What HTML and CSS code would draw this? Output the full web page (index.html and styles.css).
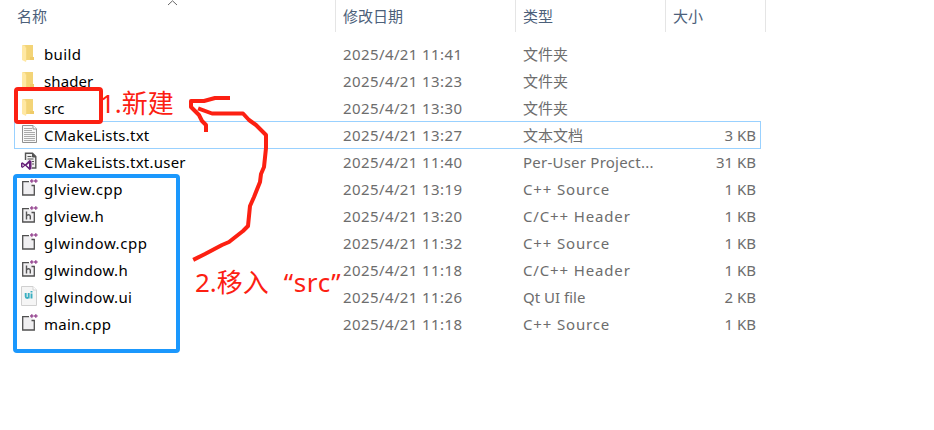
FILE: index.html
```html
<!DOCTYPE html>
<html lang="zh-CN">
<head>
<meta charset="utf-8">
<title>文件列表</title>
<link rel="stylesheet" href="styles.css">
</head>
<body>
<svg class="defs" width="0" height="0">
  <symbol id="folder" viewBox="0 0 20 20"><path d="M5 2H13V17H5Z" fill="#f3d477"/><path d="M10 14h4V17h-4z" fill="#efcb68"/><path d="M2 2L6 4.500V19L2 17Z" fill="#ffe8a3"/><path d="M2 2H5L6.500 4.500V16L6 19V4.500Z" fill="#f8dc87"/></symbol>
  <symbol id="text" viewBox="0 0 20 20"><path d="M2.500 1.500H13L16.500 5V18.500H2.500Z" fill="#f8f8f8" stroke="#919191"/><path d="M13 1.500V5h3.500" fill="#fff" stroke="#919191"/><path d="M4 4.500h8M4 6.500h8M4 8.500h11M4 10.500h11M4 12.500h11M4 14.500h11M4 16.500h11" stroke="#aaa"/></symbol>
  <symbol id="user" viewBox="0 0 20 20"><path d="M5.500 9V2.200H12.500L15.800 5.500V17H12" fill="#f1f1f1" stroke="#555" stroke-width="1.400"/><path d="M12.500 2.500V6H16" fill="#555" stroke="#555"/><path d="M7.500 5.500h4M7.500 8h6M12 10.500h2M12 13h2" stroke="#555"/><path d="M1 12l1.500-.8 2.700 2.100L9.500 9l2 1v8l-2 1-4.300-4.200-2.700 2.100L1 16ZM2.500 13v2.500L4 14.200ZM9 12.200l-2.400 2L9 16.200Z" fill="#68217a" fill-rule="evenodd"/></symbol>
  <symbol id="cpp" viewBox="0 0 20 20"><path d="M2.700 3.700H11L14.300 7V17H2.700Z" fill="#f0eff1"/><path d="M9 3.700H2.700V17H14.300V7.500H11.500" fill="none" stroke="#505050" stroke-width="1.300"/><path d="M10 3h3.600M11.800 1.200v3.600M14 3h3.600M15.800 1.200v3.600" stroke="#9b4f96" stroke-width="1.500"/></symbol>
  <symbol id="header" viewBox="0 0 20 20"><use href="#cpp"/><path d="M6.500 6.500V14.500M6.500 11c.8-1.800 3.800-1.800 3.800.3V14.500" fill="none" stroke="#555" stroke-width="1.400"/></symbol>
  <symbol id="ui" viewBox="0 0 20 20"><path d="M1.500.5H13L16.500 4V19.500H1.500Z" fill="#f5f5f5" stroke="#d0d0d0"/><path d="M13 .5V4h3.500" fill="#fff" stroke="#d2d2d2"/><path d="M5.700 7v3.500q0 1.500 1.500 1.500t1.500-1.500V7V12.500M11.500 7.500V12.500M11.500 5v1.500" fill="none" stroke="#3bafc1" stroke-width="1.900"/></symbol>
</svg>
<main class="explorer">
  <header class="row heading">
    <div class="name">名称<svg class="sort" viewBox="0 0 10 6"><path d="M.5 5L5 .8 9.500 5" fill="none" stroke="#666"/></svg></div><div>修改日期</div><div>类型</div><div>大小</div>
  </header>
  <section class="files">
    <div class="row"><div class="name"><svg><use href="#folder"/></svg>build</div><div class="date">2025/4/21 11:41</div><div>文件夹</div><div class="size"></div></div>
    <div class="row"><div class="name tight"><svg><use href="#folder"/></svg>shader</div><div class="date">2025/4/21 13:23</div><div>文件夹</div><div class="size"></div></div>
    <div class="row"><div class="name tight"><svg><use href="#folder"/></svg>src</div><div class="date">2025/4/21 13:30</div><div>文件夹</div><div class="size"></div></div>
    <div class="row selected"><div class="name project"><svg><use href="#text"/></svg>CMakeLists.txt</div><div class="date">2025/4/21 13:27</div><div>文本文档</div><div class="size">3 KB</div></div>
    <div class="row"><div class="name project"><svg><use href="#user"/></svg>CMakeLists.txt.user</div><div class="date">2025/4/21 11:40</div><div class="project">Per-User Project...</div><div class="size">31 KB</div></div>
    <div class="row"><div class="name source"><svg><use href="#cpp"/></svg>glview.cpp</div><div class="date">2025/4/21 13:19</div><div class="kind">C++ Source</div><div class="size">1 KB</div></div>
    <div class="row"><div class="name"><svg><use href="#header"/></svg>glview.h</div><div class="date">2025/4/21 13:20</div><div class="kind">C/C++ Header</div><div class="size">1 KB</div></div>
    <div class="row"><div class="name source"><svg><use href="#cpp"/></svg>glwindow.cpp</div><div class="date">2025/4/21 11:32</div><div class="kind">C++ Source</div><div class="size">1 KB</div></div>
    <div class="row"><div class="name"><svg><use href="#header"/></svg>glwindow.h</div><div class="date">2025/4/21 11:18</div><div class="kind">C/C++ Header</div><div class="size">1 KB</div></div>
    <div class="row"><div class="name"><svg><use href="#ui"/></svg>glwindow.ui</div><div class="date">2025/4/21 11:26</div><div>Qt UI file</div><div class="size">2 KB</div></div>
    <div class="row"><div class="name project"><svg><use href="#cpp"/></svg>main.cpp</div><div class="date">2025/4/21 11:18</div><div class="kind">C++ Source</div><div class="size">1 KB</div></div>
  </section>
  <div class="box red-box"></div>
  <div class="box blue-box"></div>
  <svg class="arrow" viewBox="0 0 934 430"><path d="M228 98H215L204 101H191V107L199 115 202 121 206 125V130M200 109L212 113.500H243L249 120 256 125 266 135V148L264 167 261 174 260 182 254 197 250 206 248 226 243 231 229 242 222 245 205 254 195 259"/></svg>
  <div class="note note-create">1.新建</div>
  <div class="note note-move">2.移入<span class="quote">“src”</span></div>
</main>
</body>
</html>
```
FILE: styles.css
```css
body { margin: 0; background: #fff; }
.defs { position: absolute; }
.explorer {
  position: relative;
  width: 934px;
  height: 430px;
  overflow: hidden;
  font: 15px/27px "Noto Sans", "Noto Sans CJK SC", sans-serif;
  color: #6d6d6d;
}
.row {
  display: grid;
  grid-template-columns: 328px 180px 150px 100px;
  width: 758px;
  height: 27px;
  padding-left: 8px;
  white-space: nowrap;
}
.row > div { padding-left: 7px; }
.heading { height: 32px; color: #4c607a; margin-bottom: 9px; }
.heading > div { height: 32px; line-height: 33px; box-sizing: border-box; border-right: 1px solid #e5e5e5; }
.heading .name { padding-left: 9px; position: relative; }
.sort { position: absolute; left: 159px; top: 0; width: 11px; height: 6px; }
.files .name { display: flex; align-items: center; color: #000; padding-left: 12px; letter-spacing: .35px; }
.files .name svg { width: 20px; height: 20px; margin: 0 4px 3px 0; }
.files .tight { letter-spacing: .1px; }
.files .source { letter-spacing: .55px; }
.files .project { letter-spacing: .23px; }
.kind { letter-spacing: .85px; }
.date { letter-spacing: .4px; }
.row > .size { text-align: right; padding: 0 10px 0 0; }
.selected { position: relative; }
.selected::after {
  content: "";
  position: absolute;
  left: 14px;
  top: -1px;
  width: 745px;
  height: 26px;
  border: 1px solid #99d1ff;
}
.box { position: absolute; box-sizing: border-box; border: 4px solid; border-radius: 4px; }
.red-box { left: 14px; top: 87px; width: 89px; height: 37px; border-color: #fc2012; }
.blue-box { left: 13px; top: 174px; width: 167px; height: 179px; border-color: #1b98fd; }
.arrow { position: absolute; left: 0; top: 0; width: 934px; height: 430px; }
.arrow path { fill: none; stroke: #fc2012; stroke-width: 4; stroke-linecap: square; stroke-linejoin: round; }
.note { position: absolute; color: #fc2012; font-size: 26px; line-height: 36px; white-space: nowrap; }
.note-create { left: 100px; top: 85px; }
.note-move { left: 195px; top: 264px; }
.quote { margin-left: 15px; letter-spacing: .6px; }
```
